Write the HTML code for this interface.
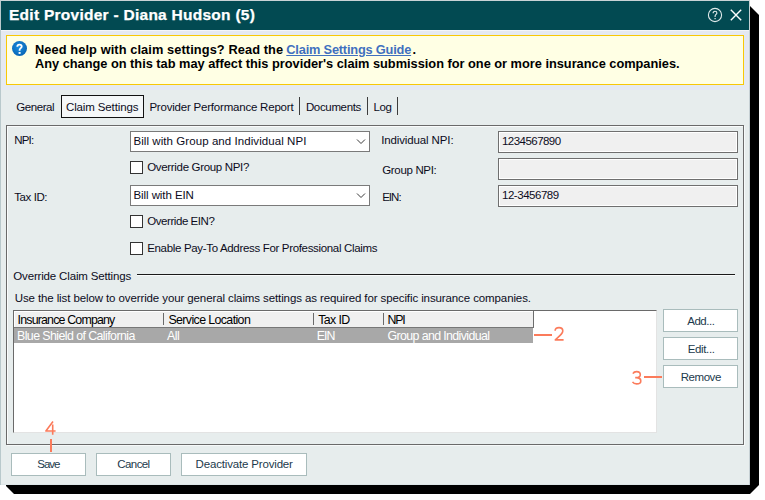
<!DOCTYPE html>
<html><head><meta charset="utf-8">
<style>
html,body{margin:0;padding:0;width:765px;height:500px;overflow:hidden;background:#fff;font-family:"Liberation Sans",sans-serif;}
.a{position:absolute;box-sizing:border-box;}
.t{position:absolute;white-space:nowrap;font-family:"Liberation Sans",sans-serif;}
</style></head><body>
<!-- shadow -->
<div class="a" style="left:6px;top:6px;width:753px;height:488px;background:#000;clip-path:polygon(0 0,744px 0,753px 9px,753px 479px,744px 488px,8px 488px,0 480px);"></div>
<!-- dialog -->
<div class="a" style="left:0;top:0;width:750px;height:485px;background:#e7eded;border-left:1px solid #b9c9cc;border-top:1px solid #c9d3d6;"></div>
<div class="a" style="left:749px;top:0;width:1px;height:485px;background:#c6d0d4;"></div>
<div class="a" style="left:1px;top:484px;width:748px;height:1px;background:#dde6e8;"></div>
<!-- top bluish region -->
<div class="a" style="left:1px;top:30px;width:748px;height:60px;background:#e5e9f1;"></div>
<div class="a" style="left:1px;top:30px;width:748px;height:1px;background:#f3f5f9;"></div>
<!-- title bar -->
<div class="a" style="left:1px;top:1px;width:748px;height:29px;background:#024a52;"></div>
<!-- help & close icons -->
<svg class="a" style="left:705px;top:5px" width="20" height="20" viewBox="0 0 20 20">
  <circle cx="10" cy="10" r="6.6" fill="none" stroke="#dfe9ea" stroke-width="1.1"/>
  <path d="M8.1 8.3 C8.1 7 8.9 6.2 10 6.2 C11.1 6.2 11.9 6.9 11.9 8 C11.9 9.3 10.1 9.6 10.1 11.1 V11.9" stroke="#e3ecec" stroke-width="1.1" fill="none"/><rect x="9.5" y="13" width="1.2" height="1.2" fill="#e3ecec"/>
</svg>
<svg class="a" style="left:726px;top:5px" width="20" height="20" viewBox="0 0 20 20">
  <path d="M4.8 4.8 L15.2 15.2 M15.2 4.8 L4.8 15.2" stroke="#fff" stroke-width="1.4" fill="none"/>
</svg>
<!-- yellow box -->
<div class="a" style="left:6px;top:35px;width:738px;height:50px;background:#ffffe4;border:1px solid #f8c806;"></div>
<svg class="a" style="left:11px;top:40px" width="17" height="17" viewBox="0 0 17 17">
  <defs><radialGradient id="qg" cx="0.45" cy="0.4" r="0.65"><stop offset="0" stop-color="#1b8fe0"/><stop offset="1" stop-color="#0762b2"/></radialGradient></defs>
  <circle cx="8.5" cy="8.5" r="7.5" fill="url(#qg)"/>
  <path d="M6.3 6.8 C6.3 5.3 7.3 4.7 8.5 4.7 C9.7 4.7 10.7 5.4 10.7 6.6 C10.7 8.1 8.6 8.3 8.6 10 V10.8" stroke="#fff" stroke-width="1.8" fill="none"/>
  <rect x="7.6" y="12" width="2" height="1.9" fill="#fff"/>
</svg>
<!-- tabs -->
<div class="a" style="left:61px;top:95px;width:83px;height:23px;background:#f4f7f8;border:1px solid #111;"></div>
<div class="a" style="left:299px;top:97px;width:1px;height:18px;background:#3c3c3c;"></div>
<div class="a" style="left:367px;top:97px;width:1px;height:18px;background:#3c3c3c;"></div>
<div class="a" style="left:397px;top:97px;width:1px;height:18px;background:#3c3c3c;"></div>
<!-- panel -->
<div class="a" style="left:6px;top:125px;width:738px;height:320px;border:1px solid #6a6a6a;box-shadow:inset 1px 1px 0 #fafcfc, 1px 1px 0 #f6f9f9;"></div>
<!-- selects -->
<div class="a" style="left:130px;top:131px;width:240px;height:21px;background:#fff;border:1px solid #7a7a7a;"></div>
<div class="a" style="left:130px;top:185px;width:240px;height:21px;background:#fff;border:1px solid #7a7a7a;"></div>
<svg class="a" style="left:355px;top:136px" width="12" height="10" viewBox="0 0 12 10"><path d="M2 3.5 L6 7.5 L10 3.5" stroke="#3a3a3a" stroke-width="1" fill="none"/></svg>
<svg class="a" style="left:355px;top:190px" width="12" height="10" viewBox="0 0 12 10"><path d="M2 3.5 L6 7.5 L10 3.5" stroke="#3a3a3a" stroke-width="1" fill="none"/></svg>
<!-- checkboxes -->
<div class="a" style="left:130px;top:161px;width:13px;height:13px;background:#fff;border:1px solid #333;"></div>
<div class="a" style="left:130px;top:215px;width:13px;height:13px;background:#fff;border:1px solid #333;"></div>
<div class="a" style="left:130px;top:242px;width:13px;height:13px;background:#fff;border:1px solid #333;"></div>
<!-- inputs -->
<div class="a" style="left:498px;top:131px;width:240px;height:22px;background:#f0f0f0;border:1px solid #6f6f6f;box-shadow:inset 1px 1px 0 #fff,inset -1px -1px 0 #fff;"></div>
<div class="a" style="left:498px;top:158px;width:240px;height:22px;background:#f0f0f0;border:1px solid #6f6f6f;box-shadow:inset 1px 1px 0 #fff,inset -1px -1px 0 #fff;"></div>
<div class="a" style="left:498px;top:185px;width:240px;height:22px;background:#f0f0f0;border:1px solid #6f6f6f;box-shadow:inset 1px 1px 0 #fff,inset -1px -1px 0 #fff;"></div>
<!-- group line -->
<div class="a" style="left:137px;top:274px;width:598px;height:1px;background:#1a1a1a;box-shadow:0 1px 0 #fafcfc;"></div>
<!-- listview -->
<div class="a" style="left:13px;top:310px;width:644px;height:123px;background:#fff;border-left:1px solid #6a6a6a;border-top:1px solid #6a6a6a;border-right:1px solid #e3e3e3;border-bottom:1px solid #e3e3e3;"></div>
<div class="a" style="left:14px;top:311px;width:520px;height:17px;background:#f0f0f0;border-bottom:1px solid #777;border-right:1px solid #6d6d6d;box-shadow:inset 1px 1px 0 #fff;"></div>
<div class="a" style="left:163px;top:313px;width:1px;height:12px;background:#6a6a6a;"></div>
<div class="a" style="left:313px;top:313px;width:1px;height:12px;background:#6a6a6a;"></div>
<div class="a" style="left:383px;top:313px;width:1px;height:12px;background:#6a6a6a;"></div>
<div class="a" style="left:14px;top:328px;width:519px;height:15px;background:#a8a8a8;"></div>
<!-- buttons -->
<div class="a" style="left:663px;top:309px;width:75px;height:23px;background:#fff;border:1px solid #a9bcbc;"></div>
<div class="a" style="left:663px;top:337px;width:75px;height:23px;background:#fff;border:1px solid #a9bcbc;"></div>
<div class="a" style="left:663px;top:365px;width:75px;height:23px;background:#fff;border:1px solid #a9bcbc;"></div>
<div class="a" style="left:11px;top:453px;width:75px;height:23px;background:#fff;border:1px solid #a9bcbc;"></div>
<div class="a" style="left:96px;top:453px;width:75px;height:23px;background:#fff;border:1px solid #a9bcbc;"></div>
<div class="a" style="left:181px;top:453px;width:126px;height:23px;background:#fff;border:1px solid #a9bcbc;"></div>
<span class="t" style="left:9.00px;top:6.60px;font-size:15.5px;line-height:15.5px;font-weight:700;color:#ffffff;letter-spacing:0.264px;-webkit-text-stroke:0.25px #fff;">Edit Provider - Diana Hudson (5)</span>
<span class="t" style="left:35.00px;top:44.00px;font-size:12.8px;line-height:12.8px;font-weight:700;color:#000;letter-spacing:0.092px;">Need help with claim settings? Read the</span>
<span class="t" style="left:286.30px;top:44.00px;font-size:12.8px;line-height:12.8px;font-weight:700;color:#3f70bf;letter-spacing:-0.194px;text-decoration:underline;">Claim Settings Guide</span>
<span class="t" style="left:412.50px;top:44.00px;font-size:12.8px;line-height:12.8px;font-weight:700;color:#000;letter-spacing:0.000px;">.</span>
<span class="t" style="left:35.00px;top:58.00px;font-size:12.8px;line-height:12.8px;font-weight:700;color:#000;letter-spacing:-0.013px;">Any change on this tab may affect this provider&#x27;s claim submission for one or more insurance companies.</span>
<span class="t" style="left:16.30px;top:102.00px;font-size:11.5px;line-height:11.5px;font-weight:400;color:#0c0c1c;letter-spacing:-0.443px;">General</span>
<span class="t" style="left:66.00px;top:102.00px;font-size:11.5px;line-height:11.5px;font-weight:400;color:#0c0c1c;letter-spacing:-0.130px;">Claim Settings</span>
<span class="t" style="left:149.40px;top:102.00px;font-size:11.5px;line-height:11.5px;font-weight:400;color:#0c0c1c;letter-spacing:-0.206px;">Provider Performance Report</span>
<span class="t" style="left:305.90px;top:102.00px;font-size:11.5px;line-height:11.5px;font-weight:400;color:#0c0c1c;letter-spacing:-0.339px;">Documents</span>
<span class="t" style="left:373.60px;top:102.00px;font-size:11.5px;line-height:11.5px;font-weight:400;color:#0c0c1c;letter-spacing:-0.496px;">Log</span>
<span class="t" style="left:14.30px;top:135.00px;font-size:11.5px;line-height:11.5px;font-weight:400;color:#0c0c1c;letter-spacing:-0.857px;">NPI:</span>
<span class="t" style="left:14.30px;top:192.00px;font-size:11.5px;line-height:11.5px;font-weight:400;color:#0c0c1c;letter-spacing:-0.432px;">Tax ID:</span>
<span class="t" style="left:381.20px;top:135.00px;font-size:11.5px;line-height:11.5px;font-weight:400;color:#0c0c1c;letter-spacing:-0.125px;">Individual NPI:</span>
<span class="t" style="left:382.20px;top:164.50px;font-size:11.5px;line-height:11.5px;font-weight:400;color:#0c0c1c;letter-spacing:-0.325px;">Group NPI:</span>
<span class="t" style="left:382.20px;top:192.00px;font-size:11.5px;line-height:11.5px;font-weight:400;color:#0c0c1c;letter-spacing:-0.990px;">EIN:</span>
<span class="t" style="left:133.50px;top:136.00px;font-size:11.5px;line-height:11.5px;font-weight:400;color:#0c0c1c;letter-spacing:0.067px;">Bill with Group and Individual NPI</span>
<span class="t" style="left:133.50px;top:190.00px;font-size:11.5px;line-height:11.5px;font-weight:400;color:#0c0c1c;letter-spacing:-0.078px;">Bill with EIN</span>
<span class="t" style="left:147.20px;top:162.00px;font-size:11.5px;line-height:11.5px;font-weight:400;color:#0c0c1c;letter-spacing:-0.323px;">Override Group NPI?</span>
<span class="t" style="left:147.20px;top:215.50px;font-size:11.5px;line-height:11.5px;font-weight:400;color:#0c0c1c;letter-spacing:-0.430px;">Override EIN?</span>
<span class="t" style="left:147.20px;top:242.50px;font-size:11.5px;line-height:11.5px;font-weight:400;color:#0c0c1c;letter-spacing:-0.329px;">Enable Pay-To Address For Professional Claims</span>
<span class="t" style="left:502.00px;top:136.00px;font-size:11.5px;line-height:11.5px;font-weight:400;color:#0c0c1c;letter-spacing:-0.540px;">1234567890</span>
<span class="t" style="left:502.00px;top:189.50px;font-size:11.5px;line-height:11.5px;font-weight:400;color:#0c0c1c;letter-spacing:-0.466px;">12-3456789</span>
<span class="t" style="left:13.30px;top:270.50px;font-size:11.5px;line-height:11.5px;font-weight:400;color:#0c0c1c;letter-spacing:-0.163px;">Override Claim Settings</span>
<span class="t" style="left:14.70px;top:293.00px;font-size:11.5px;line-height:11.5px;font-weight:400;color:#0c0c1c;letter-spacing:-0.106px;">Use the list below to override your general claims settings as required for specific insurance companies.</span>
<span class="t" style="left:17.60px;top:313.50px;font-size:12.4px;line-height:12.4px;font-weight:400;color:#000;letter-spacing:-0.824px;">Insurance Company</span>
<span class="t" style="left:168.40px;top:313.50px;font-size:12.4px;line-height:12.4px;font-weight:400;color:#000;letter-spacing:-0.614px;">Service Location</span>
<span class="t" style="left:318.30px;top:313.50px;font-size:12.4px;line-height:12.4px;font-weight:400;color:#000;letter-spacing:-0.653px;">Tax ID</span>
<span class="t" style="left:387.60px;top:313.50px;font-size:12.4px;line-height:12.4px;font-weight:400;color:#000;letter-spacing:-1.256px;">NPI</span>
<span class="t" style="left:17.00px;top:329.70px;font-size:12.4px;line-height:12.4px;font-weight:400;color:#fff;letter-spacing:-0.581px;">Blue Shield of California</span>
<span class="t" style="left:167.00px;top:329.70px;font-size:12.4px;line-height:12.4px;font-weight:400;color:#fff;letter-spacing:-0.509px;">All</span>
<span class="t" style="left:316.80px;top:329.70px;font-size:12.4px;line-height:12.4px;font-weight:400;color:#fff;letter-spacing:-1.003px;">EIN</span>
<span class="t" style="left:387.60px;top:329.70px;font-size:12.4px;line-height:12.4px;font-weight:400;color:#fff;letter-spacing:-0.631px;">Group and Individual</span>
<span class="t" style="left:687.20px;top:316.00px;font-size:11.5px;line-height:11.5px;font-weight:400;color:#1c3a4c;letter-spacing:-0.450px;">Add...</span>
<span class="t" style="left:687.70px;top:344.00px;font-size:11.5px;line-height:11.5px;font-weight:400;color:#1c3a4c;letter-spacing:-0.351px;">Edit...</span>
<span class="t" style="left:680.70px;top:372.00px;font-size:11.5px;line-height:11.5px;font-weight:400;color:#1c3a4c;letter-spacing:-0.445px;">Remove</span>
<span class="t" style="left:37.30px;top:459.20px;font-size:11.5px;line-height:11.5px;font-weight:400;color:#1c3a4c;letter-spacing:-1.039px;">Save</span>
<span class="t" style="left:117.30px;top:459.20px;font-size:11.5px;line-height:11.5px;font-weight:400;color:#1c3a4c;letter-spacing:-0.588px;">Cancel</span>
<span class="t" style="left:195.60px;top:459.20px;font-size:11.5px;line-height:11.5px;font-weight:400;color:#1c3a4c;letter-spacing:-0.168px;">Deactivate Provider</span>
<!-- callouts -->
<div class="a" style="left:534px;top:334px;width:18px;height:2px;background:#fb7b5b;"></div>
<div class="a" style="left:644px;top:376px;width:18px;height:2px;background:#fb7b5b;"></div>
<div class="a" style="left:50px;top:439px;width:2px;height:13px;background:#fb7b5b;"></div>
<svg class="a" style="left:0;top:0" width="765" height="500" viewBox="0 0 765 500">
<g stroke="#fb7b5b" stroke-width="1.6" fill="none" stroke-linecap="butt" stroke-linejoin="round">
<path d="M555.1 330.8 C555.2 328.5 556.8 327.6 559 327.6 C561.3 327.6 562.8 329 562.8 331 C562.8 333.2 561.2 334.6 555.3 339.9 H563.6"/>
<path d="M632.9 373.6 C633.6 372.2 634.9 371.6 636.6 371.6 C638.9 371.6 640.3 372.9 640.3 374.7 C640.3 376.6 638.7 377.6 636.2 377.6 H635.2 M636.2 377.6 C639.1 377.6 640.8 378.9 640.8 380.9 C640.8 382.9 639.1 383.9 636.6 383.9 C634.8 383.9 633.4 383.3 632.5 381.9"/>
<path d="M53 421.6 L45.9 431 H55.6 M52.7 424.6 V434.8"/>
</g>
</svg>
</body></html>
